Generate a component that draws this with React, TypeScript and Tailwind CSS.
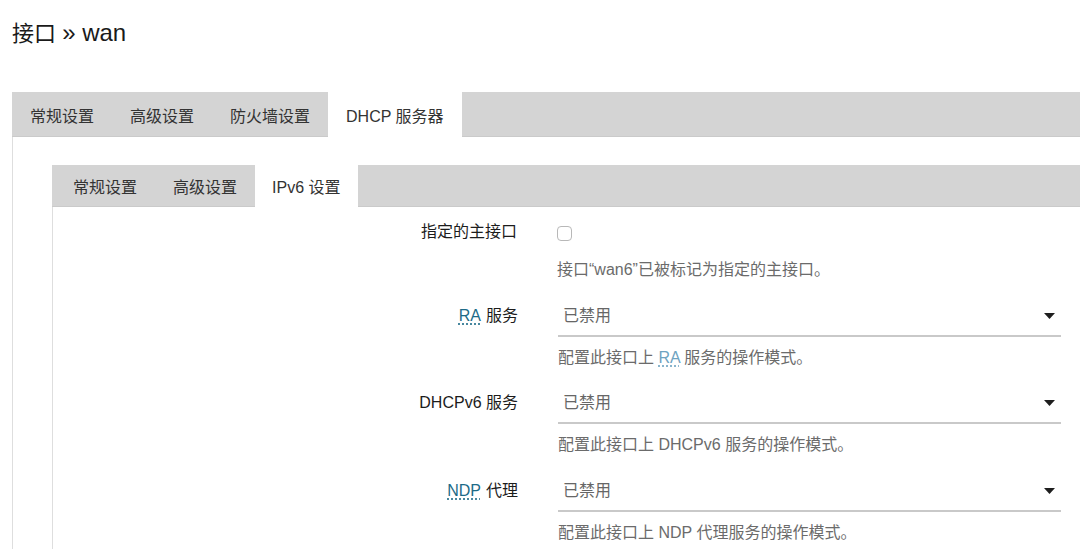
import React from "react";

const FONT = '"Liberation Sans", "Noto Sans CJK SC", sans-serif';

function Caret() {
  return (
    <svg width="11" height="6" viewBox="0 0 11 6" className="shrink-0">
      <path d="M0 0 H11 L5.5 6 Z" fill="#1e1e1e" />
    </svg>
  );
}

function Abbr({ children, light }: { children: React.ReactNode; light?: boolean }) {
  return (
    <span
      className={
        light
          ? "text-[#6ea3c1] underline decoration-dotted decoration-[#6ea3c1] underline-offset-[3px]"
          : "text-[#1d6b88] underline decoration-dotted decoration-[#1d6b88] underline-offset-[3px]"
      }
    >
      {children}
    </span>
  );
}

function SelectRow({
  label,
  desc,
  tight,
}: {
  label: React.ReactNode;
  desc: React.ReactNode;
  tight?: boolean;
}) {
  return (
    <div className={tight ? "flex items-start mt-[14px]" : "flex items-start mt-[15px]"}>
      <div className="w-[465px] h-[38px] flex items-center justify-end text-[16px] text-[#1c1c1c]">
        {label}
      </div>
      <div className="ml-[40px] w-[503px] flex flex-col">
        <div className="h-[40px] border-b-2 border-[#c9c9c9] flex items-center justify-between pl-[5px] pr-[6px] text-[16px] text-[#666]">
          <span>已禁用</span>
          <Caret />
        </div>
        <div className="mt-[9px] h-[24px] leading-[24px] text-[16px] text-[#6b6b6b]">{desc}</div>
      </div>
    </div>
  );
}

export default function App() {
  const outerTabs = ["常规设置", "高级设置", "防火墙设置"];
  const innerTabs = ["常规设置", "高级设置"];
  return (
    <div
      className="w-[1080px] h-[549px] overflow-hidden bg-white text-[#333]"
      style={{ fontFamily: FONT }}
    >
      <h2 className="pl-[12px] pt-[18px] h-[48px] leading-[30px] text-[22px] text-[#1a1a1a]">
        接口 <span className="text-[24px]">» wan</span>
      </h2>

      <div className="mt-[44px] ml-[12px]">
        {/* top-level tabs */}
        <div className="h-[45px] bg-[#d4d4d4] border-b border-[#cacaca] flex">
          {outerTabs.map((t) => (
            <div key={t} className="px-[18px] flex items-center pt-[5px] text-[16px] text-[#333]">
              {t}
            </div>
          ))}
          <div className="px-[18px] flex items-center pt-[5px] text-[16px] text-[#333] bg-white -mb-px">
            DHCP 服务器
          </div>
        </div>

        <div className="border-l border-[#dedede] pt-[28px] pl-[39px] h-[420px]">
          {/* nested tabs */}
          <div className="h-[42px] bg-[#d4d4d4] border-b border-[#cacaca] flex pl-[3px]">
            {innerTabs.map((t) => (
              <div key={t} className="px-[18px] flex items-center pt-[4px] text-[16px] text-[#333]">
                {t}
              </div>
            ))}
            <div className="px-[17px] flex items-center pt-[4px] text-[16px] text-[#333] bg-white -mb-px">
              IPv6 设置
            </div>
          </div>

          <div className="border-l border-[#dedede] h-[400px]">
            {/* designated master */}
            <div className="flex items-start pt-[13px]">
              <div className="w-[464px] h-[24px] flex items-center justify-end text-[16px] text-[#1c1c1c]">
                指定的主接口
              </div>
              <div className="ml-[40px] w-[503px] flex flex-col">
                <div className="h-[24px] flex items-center">
                  <span className="w-[15px] h-[15px] rounded-[4px] border border-[#b8b8b8] bg-white mt-[2px]" />
                </div>
                <div className="mt-[14px] h-[24px] leading-[24px] text-[16px] text-[#6b6b6b]">
                  接口“wan6”已被标记为指定的主接口。
                </div>
              </div>
            </div>

            <SelectRow
              label={
                <>
                  <Abbr>RA</Abbr>
                  <span className="ml-[5px]">服务</span>
                </>
              }
              desc={
                <>
                  配置此接口上 <Abbr light>RA</Abbr> 服务的操作模式。
                </>
              }
            />
            <SelectRow
              tight
              label={<span>DHCPv6 服务</span>}
              desc={<>配置此接口上 DHCPv6 服务的操作模式。</>}
            />
            <SelectRow
              label={
                <>
                  <Abbr>NDP</Abbr>
                  <span className="ml-[5px]">代理</span>
                </>
              }
              desc={<>配置此接口上 NDP 代理服务的操作模式。</>}
            />
          </div>
        </div>
      </div>
    </div>
  );
}
